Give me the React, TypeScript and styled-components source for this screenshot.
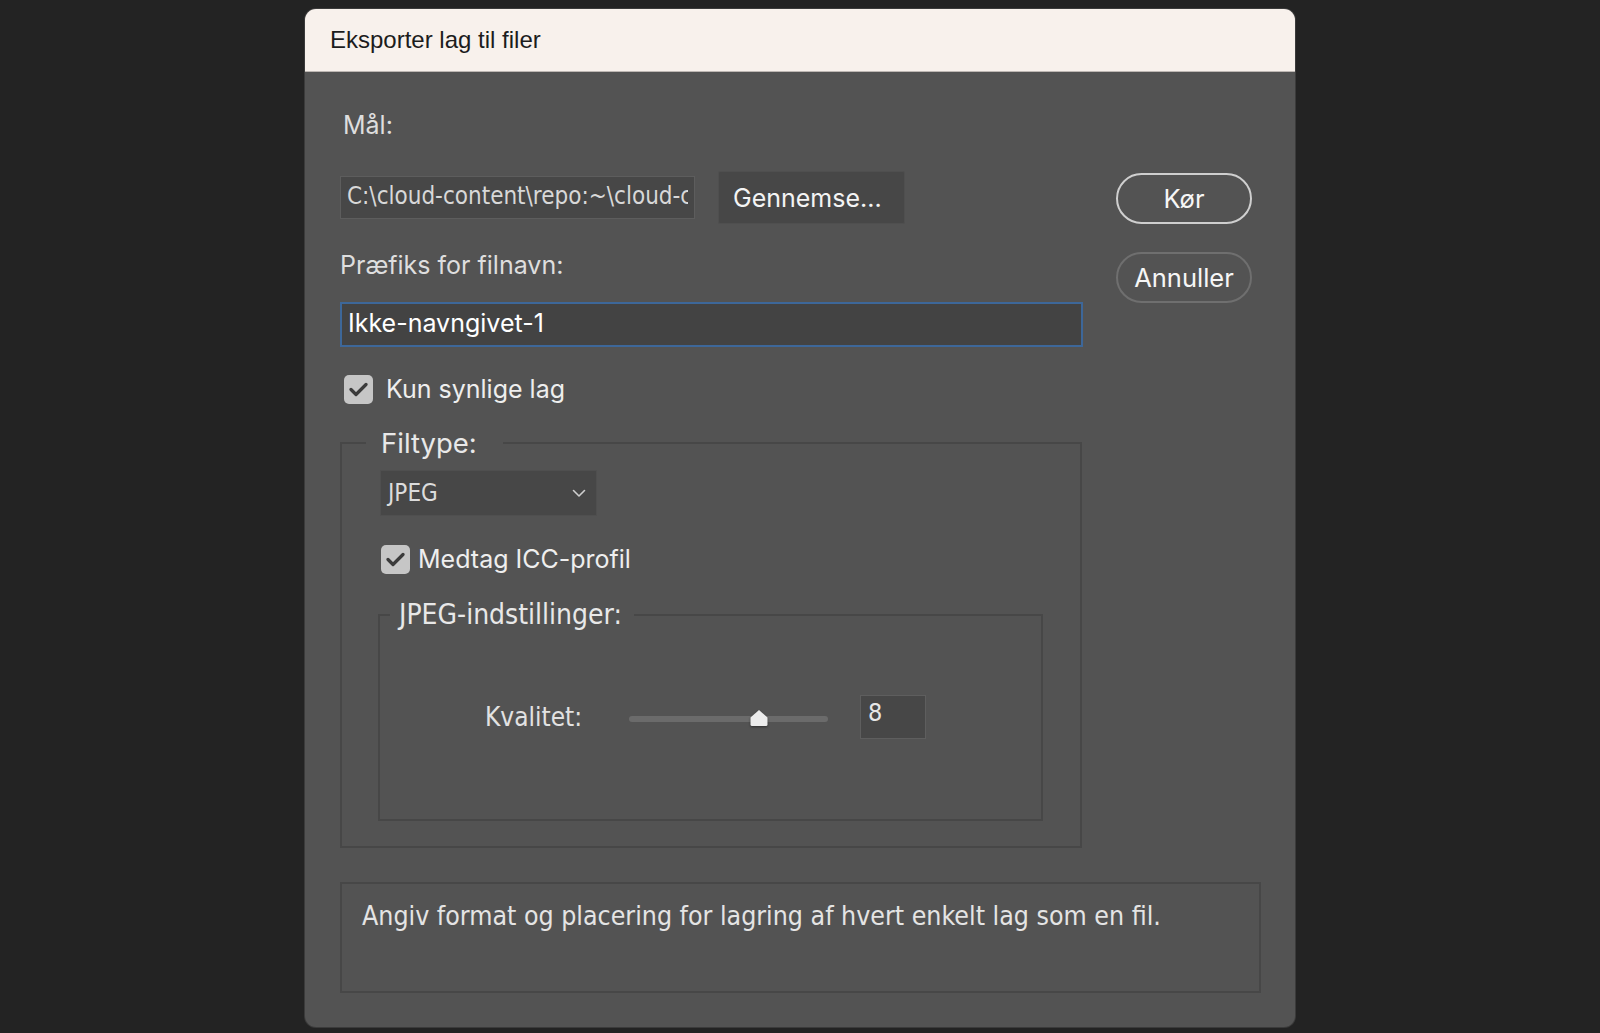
import React from 'react';
import styled, { createGlobalStyle } from 'styled-components';

const GlobalStyle = createGlobalStyle`
  html, body {
    margin: 0;
    padding: 0;
    background: #232323;
  }
  body {
    font-family: Inter, "Liberation Sans", sans-serif;
    -webkit-font-smoothing: antialiased;
  }
`;

const narrow = `"Liberation Sans Narrow", "DejaVu Sans Condensed", "Liberation Sans", sans-serif`;

const Page = styled.div`
  min-height: 1033px;
  box-sizing: border-box;
  padding-top: 9px;
  display: flex;
  justify-content: center;
`;

const Dialog = styled.div`
  width: 990px;
  height: 1018px;
  background: #535353;
  border-radius: 11px;
  overflow: hidden;
  box-shadow: 0 0 0 1px #3b3b3b;
  display: flex;
  flex-direction: column;
`;

const TitleBar = styled.div`
  height: 63px;
  flex-shrink: 0;
  background: #f8f1ec;
  border-bottom: 1px solid #bdb7b3;
  box-sizing: border-box;
  display: flex;
  align-items: center;
  padding-left: 25px;
  font-family: "Liberation Sans", Arial, sans-serif;
  font-size: 24px;
  color: #1c1c1c;
`;

const Body = styled.div`
  padding: 38px 34px 35px 35px;
  display: flex;
  flex-direction: column;
`;

const TopRow = styled.div`
  display: flex;
  align-items: flex-start;
`;

const Main = styled.div`
  width: 742px;
  display: flex;
  flex-direction: column;
`;

const Side = styled.div`
  width: 136px;
  margin-left: 34px;
  padding-top: 63px;
  display: flex;
  flex-direction: column;
  gap: 28px;
`;

const FieldLabel = styled.div<{ $indent?: number; $gap?: number }>`
  font-size: 25px;
  line-height: 30px;
  color: #dedede;
  margin-left: ${p => p.$indent ?? 0}px;
  margin-top: ${p => p.$gap ?? 0}px;
`;

const PathRow = styled.div`
  margin-top: 31px;
  display: flex;
  align-items: center;
  gap: 23px;
`;

const PathInput = styled.input`
  width: 355px;
  height: 43px;
  box-sizing: border-box;
  background: #474747;
  border: 1px solid #5d5d5d;
  padding: 0 6px 4px;
  font-family: ${narrow};
  font-stretch: condensed;
  font-size: 24px;
  color: #d8d8d8;
  outline: none;
`;

const BrowseButton = styled.button`
  width: 187px;
  height: 53px;
  box-sizing: border-box;
  background: #474747;
  border: 1px solid #4f4f4f;
  border-radius: 2px;
  padding: 0 0 0 14px;
  text-align: left;
  font-family: Inter, "Liberation Sans", sans-serif;
  font-size: 25px;
  color: #f4f4f4;
`;

const PillButton = styled.button<{ $primary?: boolean }>`
  width: 136px;
  height: 51px;
  border-radius: 26px;
  background: transparent;
  border: 2px solid ${p => (p.$primary ? '#cfcfcf' : '#6f6f6f')};
  font-family: Inter, "Liberation Sans", sans-serif;
  font-size: 25.5px;
  color: #f6f6f6;
  padding: 0;
`;

const NameInput = styled.input`
  margin-top: 22px;
  width: 743px;
  height: 45px;
  box-sizing: border-box;
  background: #434343;
  border: 2px solid #3d6799;
  padding: 0 6px 4px;
  font-family: Inter, "Liberation Sans", sans-serif;
  font-size: 25px;
  color: #ffffff;
  outline: none;
`;

const CheckRow = styled.label<{ $gap: number; $indent: number; $space: number }>`
  margin-top: ${p => p.$gap}px;
  margin-left: ${p => p.$indent}px;
  height: 30px;
  display: flex;
  align-items: center;
  gap: ${p => p.$space}px;
  font-size: 25px;
  color: #eeeeee;
`;

const CheckBox = styled.span`
  width: 29px;
  height: 29px;
  flex-shrink: 0;
  border-radius: 5px;
  background: #c6c6c6;
  display: flex;
  align-items: center;
  justify-content: center;
`;

const Group = styled.fieldset`
  margin: 24px 0 0 0;
  padding: 0 37px 25px 38px;
  border: 2px solid #474747;
  display: flex;
  flex-direction: column;
  align-items: flex-start;
`;

const GroupLegend = styled.legend`
  margin-left: -14px;
  padding: 0 26px 0 15px;
  font-size: 27.5px;
  line-height: 30px;
  color: #e8e8e8;
`;

const SubGroup = styled.fieldset`
  margin: 26px 0 0 -2px;
  padding: 0 0 80px 105px;
  border: 2px solid #474747;
  align-self: stretch;
`;

const SubLegend = styled.legend`
  margin-left: -95px;
  padding: 0 12px 0 9px;
  font-family: ${narrow};
  font-stretch: condensed;
  font-size: 28px;
  line-height: 30px;
  color: #e8e8e8;
`;

const Select = styled.div`
  margin-top: 12px;
  width: 217px;
  height: 46px;
  box-sizing: border-box;
  background: #474747;
  border: 1px solid #4f4f4f;
  padding: 0 10px 0 7px;
  display: flex;
  align-items: center;
  justify-content: space-between;
  font-family: ${narrow};
  font-stretch: condensed;
  font-size: 24px;
  color: #dcdcdc;
`;

const QualityRow = styled.div`
  margin-top: 65px;
  height: 44px;
  display: flex;
  align-items: center;
`;

const QualityLabel = styled.span`
  width: 144px;
  font-family: ${narrow};
  font-stretch: condensed;
  font-size: 26px;
  color: #e2e2e2;
`;

const Track = styled.div`
  position: relative;
  top: 2px;
  width: 199px;
  height: 6px;
  border-radius: 3px;
  background: #6b6b6b;
`;

const Thumb = styled.svg`
  position: absolute;
  top: -7px;
  margin-left: -10px;
  filter: drop-shadow(0 1px 1px rgba(0, 0, 0, 0.45));
`;

const NumberBox = styled.div`
  margin-left: 32px;
  width: 66px;
  height: 44px;
  box-sizing: border-box;
  background: #474747;
  border: 1px solid #5e5e5e;
  padding: 2px 0 0 7px;
  font-family: ${narrow};
  font-stretch: condensed;
  font-size: 25px;
  line-height: 30px;
  color: #e6e6e6;
`;

const Description = styled.div`
  margin-top: 34px;
  height: 111px;
  box-sizing: border-box;
  border: 2px solid #474747;
  padding: 17px 20px;
  font-family: ${narrow};
  font-stretch: condensed;
  font-size: 26.5px;
  line-height: 30px;
  color: #e4e4e4;
`;

const Check = () => (
  <svg width="19" height="15" viewBox="0 0 19 15">
    <path d="M2 7.5 L7 12.5 L17 2.5" fill="none" stroke="#3b3b3b" strokeWidth="3.2" strokeLinecap="round" strokeLinejoin="round" />
  </svg>
);

const Chevron = () => (
  <svg width="14" height="9" viewBox="0 0 14 9">
    <path d="M1.5 1.5 L7 7 L12.5 1.5" fill="none" stroke="#cfcfcf" strokeWidth="1.6" strokeLinecap="round" strokeLinejoin="round" />
  </svg>
);

const quality = 8;
const maxQuality = 12;
const trackInset = 9;
const trackWidth = 199;

export default function App() {
  const thumbLeft = trackInset + (quality / maxQuality) * (trackWidth - trackInset * 2);

  return (
    <>
      <GlobalStyle />
      <Page>
        <Dialog>
          <TitleBar>Eksporter lag til filer</TitleBar>
          <Body>
            <TopRow>
              <Main>
                <FieldLabel $indent={3}>Mål:</FieldLabel>
                <PathRow>
                  <PathInput readOnly value="C:\cloud-content\repo:~\cloud-content\lag" />
                  <BrowseButton>Gennemse...</BrowseButton>
                </PathRow>
                <FieldLabel $gap={26}>Præfiks for filnavn:</FieldLabel>
                <NameInput readOnly value="Ikke-navngivet-1" />
                <CheckRow $gap={27} $indent={4} $space={13}>
                  <CheckBox><Check /></CheckBox>
                  Kun synlige lag
                </CheckRow>
                <Group>
                  <GroupLegend>Filtype:</GroupLegend>
                  <Select>
                    <span>JPEG</span>
                    <Chevron />
                  </Select>
                  <CheckRow $gap={28} $indent={1} $space={8}>
                    <CheckBox><Check /></CheckBox>
                    Medtag ICC-profil
                  </CheckRow>
                  <SubGroup>
                    <SubLegend>JPEG-indstillinger:</SubLegend>
                    <QualityRow>
                      <QualityLabel>Kvalitet:</QualityLabel>
                      <Track>
                        <Thumb width="20" height="18" viewBox="0 0 20 18" style={{ left: thumbLeft }}>
                          <path d="M10 1 L18.5 8.5 L18.5 15.5 Q18.5 17 17 17 L3 17 Q1.5 17 1.5 15.5 L1.5 8.5 Z" fill="#ececec" />
                        </Thumb>
                      </Track>
                      <NumberBox>{quality}</NumberBox>
                    </QualityRow>
                  </SubGroup>
                </Group>
              </Main>
              <Side>
                <PillButton $primary>Kør</PillButton>
                <PillButton>Annuller</PillButton>
              </Side>
            </TopRow>
            <Description>Angiv format og placering for lagring af hvert enkelt lag som en fil.</Description>
          </Body>
        </Dialog>
      </Page>
    </>
  );
}
